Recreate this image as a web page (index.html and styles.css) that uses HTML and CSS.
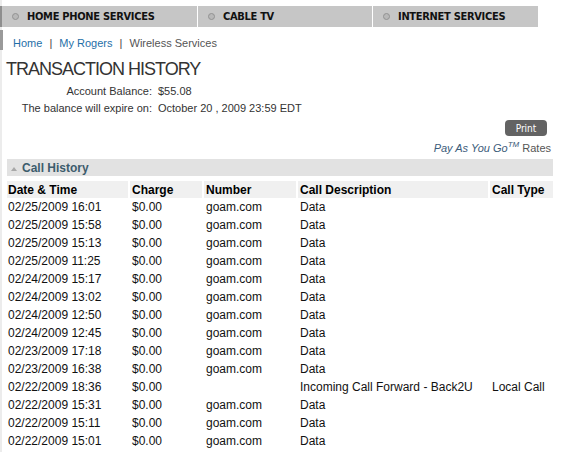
FILE: index.html
```html
<!DOCTYPE html>
<html>
  <head>
    <title>Transaction History</title>
    <link rel="stylesheet" href="styles.css">
  </head>
  <body>
    <div class="page">
      <!-- top service tabs -->
      <ul class="tabs">
        <li class="tab tab-home"><span class="dot"></span>HOME PHONE SERVICES</li>
        <li class="tab tab-cable"><span class="dot"></span>CABLE TV</li>
        <li class="tab tab-net"><span class="dot"></span>INTERNET SERVICES</li>
      </ul>

      <div class="crumbs">
        <a href="#">Home</a>
        <span class="sep">|</span>
        <a href="#">My Rogers</a>
        <span class="sep">|</span>
        <span class="current">Wireless Services</span>
      </div>

      <h1>TRANSACTION HISTORY</h1>

      <table class="balance">
        <tr>
          <td class="label">Account Balance:</td>
          <td>$55.08</td>
        </tr>
        <tr>
          <td class="label">The balance will expire on:</td>
          <td>October 20 , 2009 23:59 EDT</td>
        </tr>
      </table>

      <div class="tools">
        <button class="print">Print</button>
        <a class="rates" href="#"><em>Pay As You Go<sup>TM</sup></em> Rates</a>
      </div>

      <div class="section"><span class="tri"></span>Call History</div>

      <table class="calls">
        <thead>
          <tr>
            <th class="c-date">Date &amp; Time</th>
            <th class="c-charge">Charge</th>
            <th class="c-number">Number</th>
            <th class="c-desc">Call Description</th>
            <th class="c-type">Call Type</th>
          </tr>
        </thead>
        <tbody>
          <tr><td>02/25/2009 16:01</td><td>$0.00</td><td>goam.com</td><td>Data</td><td></td></tr>
          <tr><td>02/25/2009 15:58</td><td>$0.00</td><td>goam.com</td><td>Data</td><td></td></tr>
          <tr><td>02/25/2009 15:13</td><td>$0.00</td><td>goam.com</td><td>Data</td><td></td></tr>
          <tr><td>02/25/2009 11:25</td><td>$0.00</td><td>goam.com</td><td>Data</td><td></td></tr>
          <tr><td>02/24/2009 15:17</td><td>$0.00</td><td>goam.com</td><td>Data</td><td></td></tr>
          <tr><td>02/24/2009 13:02</td><td>$0.00</td><td>goam.com</td><td>Data</td><td></td></tr>
          <tr><td>02/24/2009 12:50</td><td>$0.00</td><td>goam.com</td><td>Data</td><td></td></tr>
          <tr><td>02/24/2009 12:45</td><td>$0.00</td><td>goam.com</td><td>Data</td><td></td></tr>
          <tr><td>02/23/2009 17:18</td><td>$0.00</td><td>goam.com</td><td>Data</td><td></td></tr>
          <tr><td>02/23/2009 16:38</td><td>$0.00</td><td>goam.com</td><td>Data</td><td></td></tr>
          <tr><td>02/22/2009 18:36</td><td>$0.00</td><td></td><td>Incoming Call Forward - Back2U</td><td>Local Call</td></tr>
          <tr><td>02/22/2009 15:31</td><td>$0.00</td><td>goam.com</td><td>Data</td><td></td></tr>
          <tr><td>02/22/2009 15:11</td><td>$0.00</td><td>goam.com</td><td>Data</td><td></td></tr>
          <tr><td>02/22/2009 15:01</td><td>$0.00</td><td>goam.com</td><td>Data</td><td></td></tr>
        </tbody>
      </table>
    </div>
  </body>
</html>
```

FILE: styles.css
```css
body {
  margin: 0;
  padding: 0;
  font-family: "Liberation Sans", Arial, sans-serif;
  color: #222;
  background: #fff;
}

.page {
  border-left: 2px solid #ececec;
  min-height: 452px;
  padding-top: 6px;
}

/* service tabs */
.tabs {
  list-style: none;
  margin: 0 0 0 -2px;
  padding: 0;
  display: flex;
  border-left: 2px solid #8e8e8e;
  width: 536px;
}

.tab {
  display: flex;
  align-items: center;
  height: 21px;
  background-color: #c6c6c6;
  font-family: "DejaVu Sans Condensed", "DejaVu Sans", sans-serif;
  font-weight: bold;
  font-size: 11px;
  letter-spacing: -0.3px;
  color: #111;
  box-sizing: border-box;
  padding-left: 10px;
}

.tab + .tab {
  border-left: 1px solid #fff;
}

.tab-home {
  width: 195px;
}

.tab-cable {
  width: 175px;
}

.tab-net {
  width: 166px;
}

.dot {
  display: inline-block;
  width: 5px;
  height: 5px;
  border-radius: 50%;
  border: 1px solid #929292;
  background-color: #b8b8b8;
  margin-right: 8px;
}

/* breadcrumb */
.crumbs {
  margin: 3px 0 0 -2px;
  border-left: 3px solid #9a9a9a;
  padding: 6px 0 0 10px;
  height: 14px;
  font-size: 11px;
  line-height: 14px;
  color: #555;
}

.crumbs a {
  color: #1f6fa8;
  text-decoration: none;
}

.crumbs .sep {
  margin: 0 4px;
  color: #444;
}

.crumbs .current {
  color: #555;
}

h1 {
  margin: 8px 0 0 4px;
  font-size: 18px;
  line-height: 22px;
  font-weight: normal;
  letter-spacing: -1px;
  color: #333;
}

/* account balance */
.balance {
  border-collapse: collapse;
  margin-top: 2px;
  font-size: 11px;
  color: #333;
}

.balance td {
  padding: 0 0 0 6px;
  height: 17px;
}

.balance .label {
  width: 150px;
  text-align: right;
  white-space: nowrap;
  padding: 0;
}

.tools {
  display: flex;
  flex-direction: column;
  align-items: flex-end;
  width: 549px;
  margin-top: 4px;
}

.print {
  width: 42px;
  height: 16px;
  margin-right: 4px;
  padding: 0;
  border: none;
  border-radius: 4px;
  background-color: #636363;
  color: #fff;
  font-family: "DejaVu Sans Condensed", "DejaVu Sans", sans-serif;
  font-size: 10px;
  cursor: pointer;
}

.rates {
  margin-top: 5px;
  font-size: 11px;
  color: #555;
  text-decoration: none;
  line-height: 14px;
}

.rates em {
  color: #3b5b7a;
}

.rates sup {
  font-size: 8px;
  line-height: 0;
}

/* call history */
.section {
  display: flex;
  align-items: center;
  margin: 4px 0 0 5px;
  width: 546px;
  height: 17px;
  background-color: #e2e2e2;
  font-size: 12px;
  font-weight: bold;
  color: #3d5c6c;
}

.tri {
  width: 0;
  height: 0;
  border-left: 3px solid transparent;
  border-right: 3px solid transparent;
  border-bottom: 4px solid #a8a8a8;
  margin: 2px 5px 0 4px;
}

.calls {
  margin: 5px 0 0 3px;
  border-collapse: separate;
  border-spacing: 2px 0;
  font-size: 12px;
  color: #111;
}

.calls th {
  height: 17px;
  padding: 0 0 0 2px;
  background-color: #f0f0f0;
  text-align: left;
  font-weight: bold;
  color: #000;
  vertical-align: middle;
}

.calls th.c-date {
  padding-left: 1px;
}

.calls td {
  height: 18px;
  padding: 0 0 0 2px;
  white-space: nowrap;
}

.calls td:first-child {
  padding-left: 1px;
}

.c-date {
  width: 120px;
}

.c-charge {
  width: 70px;
}

.c-number {
  width: 90px;
}

.c-desc {
  width: 188px;
}

.c-type {
  width: 61px;
}
```
